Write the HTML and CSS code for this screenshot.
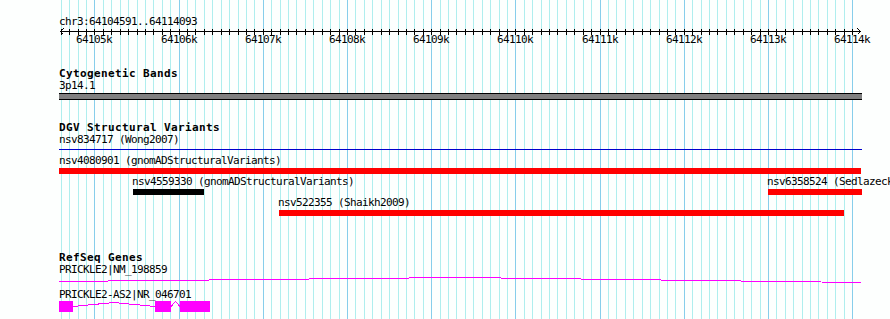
FILE: index.html
```html
<!DOCTYPE html>
<html lang="en">
<head>
  <meta charset="UTF-8">
  <title>chr3:64104591..64114093</title>
  <link rel="stylesheet" href="styles.css">
</head>
<body>

  <div class="panel">
    <!-- grid lines, filled in by script.js -->
    <svg class="grid" id="grid" width="890" height="319"></svg>

    <div class="tracks">

      <!-- ruler -->
      <div class="ruler">
        <div class="ruler-name">chr3:64104591..64114093</div>
        <div class="scale" id="scale">
          <svg id="scaleSvg" width="803" height="7">
            <line x1="1" y1="3.5" x2="802" y2="3.5"></line>
            <polyline points="4.5,0.5 1.5,3.5 4.5,6.5"></polyline>
            <polyline points="798.5,0.5 801.5,3.5 798.5,6.5"></polyline>
          </svg>
        </div>
      </div>

      <!-- cytobands -->
      <div class="track track-cyto">
        <div class="track-title">Cytogenetic Bands</div>
        <div class="row row-band">
          <div class="feat" style="left:0px;width:803px">
            <div class="flabel">3p14.1</div>
            <div class="band"></div>
          </div>
        </div>
      </div>

      <!-- DGV -->
      <div class="track track-dgv">
        <div class="track-title">DGV Structural Variants</div>
        <div class="row">
          <div class="feat" style="left:0px;width:803px">
            <div class="flabel">nsv834717 (Wong2007)</div>
            <div class="fline"></div>
          </div>
        </div>
        <div class="row">
          <div class="feat" style="left:0px;width:802px">
            <div class="flabel">nsv4080901 (gnomADStructuralVariants)</div>
            <div class="bar bar-red"></div>
          </div>
        </div>
        <div class="row">
          <div class="feat feat-in" style="left:74px;width:71px">
            <div class="flabel">nsv4559330 (gnomADStructuralVariants)</div>
            <div class="bar bar-black"></div>
          </div>
          <div class="feat feat-in" style="left:709px;width:94px">
            <div class="flabel">nsv6358524 (Sedlazeck2017)</div>
            <div class="bar bar-red"></div>
          </div>
        </div>
        <div class="row">
          <div class="feat feat-in" style="left:220px;width:565px">
            <div class="flabel">nsv522355 (Shaikh2009)</div>
            <div class="bar bar-red"></div>
          </div>
        </div>
      </div>

      <!-- RefSeq -->
      <div class="track track-genes">
        <div class="track-title">RefSeq Genes</div>
        <div class="row row-gene">
          <div class="flabel">PRICKLE2|NM_198859</div>
          <svg class="gene" width="803" height="11">
            <polyline points="0,5.5 401,1.5 802,6.5"></polyline>
          </svg>
        </div>
        <div class="row row-gene">
          <div class="flabel">PRICKLE2-AS2|NR_046701</div>
          <svg class="gene" width="803" height="11">
            <rect x="0" y="0" width="14" height="11"></rect>
            <polyline points="14,5.5 55,1.5 96,5.5"></polyline>
            <rect x="96" y="0" width="16" height="11"></rect>
            <polyline points="112,5.5 116.5,0.5 121,5.5"></polyline>
            <rect x="121" y="0" width="30" height="11"></rect>
          </svg>
        </div>
      </div>

    </div>
  </div>

  <script src="script.js"></script>

</body>
</html>
```

FILE: styles.css
```css
body {
  margin: 0;
  font-family: "DejaVu Sans Mono", monospace;
  font-size: 11px;
  letter-spacing: -0.62px;
  color: #000;
}

.panel {
  position: relative;
  width: 890px;
  height: 319px;
  overflow: hidden;
  background: #fdfffe;
}

.grid {
  position: absolute;
  top: 0;
  left: 0;
  shape-rendering: crispEdges;
}

.grid .minor {
  stroke: #afeeee;
}

.grid .major {
  stroke: #87ceeb;
}

.tracks {
  position: relative;
  padding-left: 59px;
}

.ruler {
  padding-top: 15px;
}

.ruler-name {
  line-height: 13px;
}

.scale {
  position: relative;
  height: 18px;
}

.scale svg {
  display: block;
  shape-rendering: crispEdges;
}

.scale line,
.scale polyline {
  stroke: #000;
  stroke-width: 1;
  fill: none;
}

.tick-label {
  position: absolute;
  top: 6px;
  line-height: 12px;
  transform: translateX(-50%);
}

.track {
  margin-top: 22px;
}

.track-genes {
  margin-top: 34px;
}

.track-title {
  font-size: 11px;
  font-weight: bold;
  letter-spacing: 0.38px;
  line-height: 12px;
}

.row {
  position: relative;
  height: 21px;
}

.row-band {
  height: 20px;
}

.row-gene {
  height: 25px;
}

.feat {
  position: absolute;
  top: 0;
}

.flabel {
  line-height: 12px;
  white-space: nowrap;
}

.feat-in .flabel {
  margin-left: -1px;
}

.bar {
  height: 6px;
  margin-top: 1px;
}

.bar-red {
  background: #f00;
}

.bar-black {
  background: #000;
}

.fline {
  height: 1px;
  margin-top: 3px;
  background: #0000cd;
}

.band {
  height: 5px;
  margin-top: 1px;
  background: #808080;
  border-top: 1px solid #000;
  border-bottom: 1px solid #000;
}

.gene {
  display: block;
  shape-rendering: crispEdges;
}

.gene rect {
  fill: #f0f;
}

.gene polyline {
  fill: none;
  stroke: #f0f;
  stroke-width: 1;
}
```

FILE: script.js
```js
const START = 64104591;
const END = 64114093;
const LEFT = 60;
const WIDTH = 800;
const OFFSET = 59; // left edge of the track column
const NS = 'http://www.w3.org/2000/svg';

function px(bp) {
  return Math.round(LEFT + (bp - START) * WIDTH / (END - START));
}

function line(parent, x1, y1, x2, y2, cls) {
  const l = document.createElementNS(NS, 'line');
  l.setAttribute('x1', x1);
  l.setAttribute('y1', y1);
  l.setAttribute('x2', x2);
  l.setAttribute('y2', y2);
  if (cls) l.setAttribute('class', cls);
  parent.appendChild(l);
}

const grid = document.getElementById('grid');
const scale = document.getElementById('scale');
const scaleSvg = document.getElementById('scaleSvg');

for (let bp = Math.ceil(START / 100) * 100; bp <= END; bp += 100) {
  const x = px(bp);
  const major = bp % 1000 === 0;

  // grid line over the whole panel
  line(grid, x + 0.5, 0, x + 0.5, 319, major ? 'major' : 'minor');

  // tick on the ruler
  line(scaleSvg, x - OFFSET + 0.5, 1, x - OFFSET + 0.5, 7);

  if (major) {
    const label = document.createElement('span');
    label.className = 'tick-label';
    label.style.left = (x - OFFSET) + 'px';
    label.textContent = (bp / 1000) + 'k';
    scale.appendChild(label);
  }
}
```
